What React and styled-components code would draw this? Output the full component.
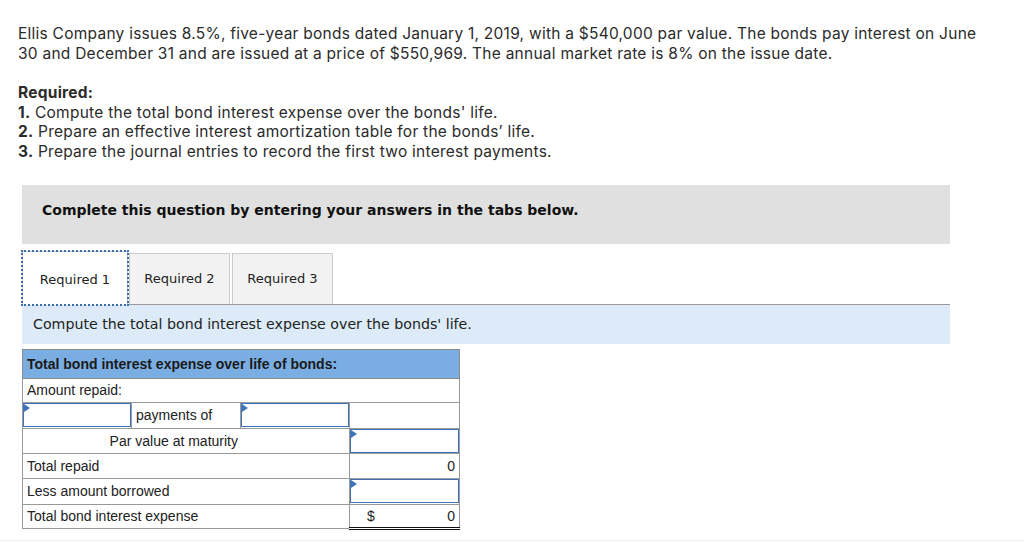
import React from "react";
import styled, { createGlobalStyle } from "styled-components";

const Global = createGlobalStyle`
  html, body { margin: 0; padding: 0; background: #fff; }
  body { font-family: "Inter", "Liberation Sans", sans-serif; color: #222; }
`;

const Page = styled.div`
  width: 1024px;
  box-sizing: border-box;
  padding: 24px 0 0 18px;
  border-bottom: 1px solid #ececec;
  height: 541px;
`;

const Intro = styled.div`
  font-family: "Inter", sans-serif;
  font-size: 15.5px;
  letter-spacing: 0.25px;
  line-height: 19.6px;
  color: #2b2b2b;
  width: 966px;
`;

const Para = styled.p`
  margin: 0 0 20px;
`;

const Line = styled.div``;

const B = styled.b`
  font-weight: 700;
`;

const Widget = styled.div`
  margin: 23px 0 0 4px;
  width: 928px;
`;

const Banner = styled.div`
  background: #e0e0e0;
  height: 59px;
  box-sizing: border-box;
  padding: 17px 0 0 20px;
  font-family: "DejaVu Sans", Verdana, sans-serif;
  font-weight: bold;
  font-size: 14px;
  color: #111;
`;

const Tabs = styled.div`
  display: flex;
  align-items: flex-end;
  margin-top: 7px;
  height: 53px;
  border-bottom: 1px solid #999;
`;

const Tab = styled.div`
  box-sizing: border-box;
  width: ${(p) => p.w}px;
  height: 51px;
  margin-right: ${(p) => p.mr || 0}px;
  display: flex;
  align-items: center;
  justify-content: center;
  font-family: "DejaVu Sans", Verdana, sans-serif;
  font-size: 13px;
  color: #222;
  background: ${(p) => (p.active ? "#fff" : "#f2f2f2")};
  border: 1px solid #ccc;
  border-bottom: none;
  ${(p) =>
    p.active &&
    `
    outline: 2px dotted #3b6fb5;
    outline-offset: -1px;
    margin-bottom: -1px;
    height: 54px;
    padding-top: 2px;
  `}
`;

const Prompt = styled.div`
  background: #dcebf7;
  height: 39px;
  box-sizing: border-box;
  padding: 11px 0 0 11px;
  font-family: "DejaVu Sans", Verdana, sans-serif;
  font-size: 14.2px;
  color: #222;
`;

const Table = styled.table`
  margin-top: 5px;
  border-collapse: collapse;
  width: 437px;
  table-layout: fixed;
  font-family: "Liberation Sans", Arial, sans-serif;
  font-size: 14px;
  color: #222;
`;

const Cell = styled.td`
  border: 1px solid #9a9a9a;
  height: 24.6px;
  padding: 0 ${(p) => p.pr || 4}px 0 4px;
  box-sizing: border-box;
  text-align: ${(p) => p.align || "left"};
  white-space: nowrap;
  ${(p) => p.total && `border-top: 1.5px solid #111; border-bottom: 3px double #111;`}
`;

const Head = styled.td`
  background: #7aaee2;
  border: 1px solid #8a8a8a;
  height: 28px;
  padding: 0 4px;
  font-weight: bold;
  font-size: 14px;
  color: #1a1a1a;
`;

const InputCell = styled.td`
  border: 1px solid #9a9a9a;
  padding: 0;
  height: 24.6px;
`;

const Input = styled.div`
  position: relative;
  box-sizing: border-box;
  height: 24px;
  border: 1.5px solid #3f74b8;
  background: #fff;
  &::before {
    content: "";
    position: absolute;
    left: 0;
    top: 0;
    border-left: 6px solid #3f74b8;
    border-top: 4px solid transparent;
    border-bottom: 4px solid transparent;
  }
`;

const Split = styled.div`
  display: flex;
  justify-content: space-between;
  padding: 0 0 0 13px;
`;

export default function App() {
  return (
    <>
      <Global />
      <Page>
        <Intro>
          <Para>
            Ellis Company issues 8.5%, five-year bonds dated January 1, 2019, with a $540,000 par value. The bonds pay interest on June
            30 and December 31 and are issued at a price of $550,969. The annual market rate is 8% on the issue date.
          </Para>
          <Line><B>Required:</B></Line>
          <Line><B>1.</B> Compute the total bond interest expense over the bonds' life.</Line>
          <Line><B>2.</B> Prepare an effective interest amortization table for the bonds’ life.</Line>
          <Line><B>3.</B> Prepare the journal entries to record the first two interest payments.</Line>
        </Intro>
        <Widget>
          <Banner>Complete this question by entering your answers in the tabs below.</Banner>
          <Tabs>
            <Tab active w={106} mr={1}>Required 1</Tab>
            <Tab w={101} mr={2}>Required 2</Tab>
            <Tab w={101}>Required 3</Tab>
          </Tabs>
          <Prompt>Compute the total bond interest expense over the bonds' life.</Prompt>
          <Table>
            <colgroup>
              <col style={{ width: 109 }} />
              <col style={{ width: 109 }} />
              <col style={{ width: 109 }} />
              <col style={{ width: 110 }} />
            </colgroup>
            <tbody>
              <tr><Head colSpan={4}>Total bond interest expense over life of bonds:</Head></tr>
              <tr><Cell colSpan={4}>Amount repaid:</Cell></tr>
              <tr>
                <InputCell><Input /></InputCell>
                <Cell>payments of</Cell>
                <InputCell><Input /></InputCell>
                <Cell />
              </tr>
              <tr>
                <Cell colSpan={3} align="right" pr={111}>Par value at maturity</Cell>
                <InputCell><Input /></InputCell>
              </tr>
              <tr>
                <Cell colSpan={3}>Total repaid</Cell>
                <Cell align="right">0</Cell>
              </tr>
              <tr>
                <Cell colSpan={3}>Less amount borrowed</Cell>
                <InputCell><Input /></InputCell>
              </tr>
              <tr>
                <Cell colSpan={3}>Total bond interest expense</Cell>
                <Cell total><Split><span>$</span><span>0</span></Split></Cell>
              </tr>
            </tbody>
          </Table>
        </Widget>
      </Page>
    </>
  );
}
